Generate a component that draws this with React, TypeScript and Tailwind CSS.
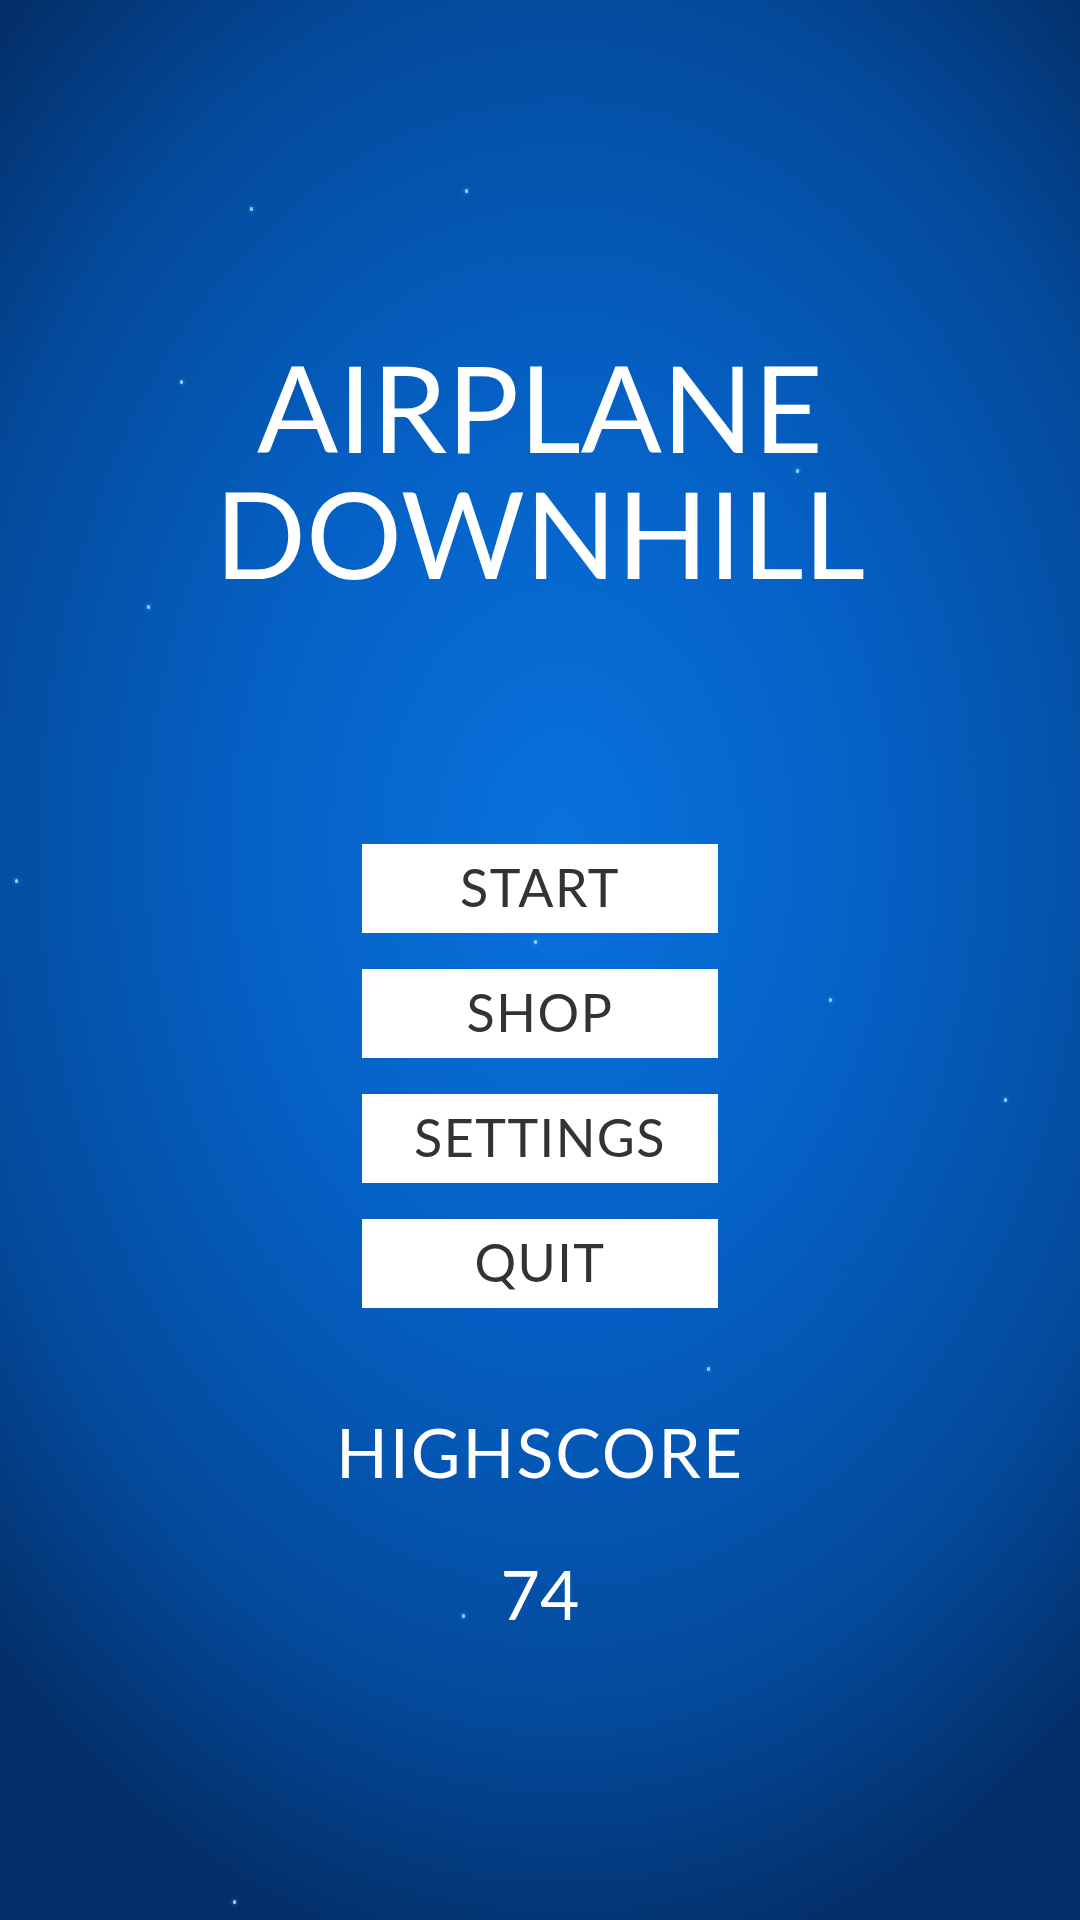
const stars = [
  { x: 250, y: 207 },
  { x: 465, y: 189 },
  { x: 180, y: 380 },
  { x: 796, y: 469 },
  { x: 147, y: 605 },
  { x: 15, y: 879 },
  { x: 534, y: 940 },
  { x: 829, y: 998 },
  { x: 1004, y: 1098 },
  { x: 707, y: 1367 },
  { x: 462, y: 1614 },
  { x: 233, y: 1900 },
];

const menu = ["START", "SHOP", "SETTINGS", "QUIT"];

export default function App() {
  return (
    <div
      className="relative overflow-hidden w-[1080px] h-[1920px] bg-[radial-gradient(ellipse_75%_60%_at_52%_44%,#0872de_0%,#0560c4_40%,#044a9c_75%,#032e68_100%)] text-white flex flex-col items-center"
      style={{ fontFamily: "Lato, 'Open Sans', sans-serif" }}
    >
      {/* stars */}
      {stars.map((s, i) => (
        <span
          key={i}
          className="absolute w-[3px] h-[4px] rounded-full bg-[#8fd0ff] shadow-[0_0_4px_#5ab4ff]"
          style={{ left: s.x, top: s.y }}
        />
      ))}

      <h1 className="relative mt-[344px] flex flex-col items-center text-[120px] font-normal text-center">
        <span className="block h-[126px] leading-[126px]">AIRPLANE</span>
        <span className="block h-[126px] leading-[126px]">DOWNHILL</span>
      </h1>

      <div className="relative mt-[248px] flex flex-col gap-[36px]">
        {menu.map((m) => (
          <button
            key={m}
            className="w-[356px] h-[89px] bg-white text-[#333333] text-[52px] font-normal tracking-[1.5px] flex items-center justify-center pb-[4px]"
          >
            {m}
          </button>
        ))}
      </div>

      <div className="relative mt-[104px] text-[68px] leading-[80px] font-normal tracking-[2px]">
        HIGHSCORE
      </div>
      <div className="relative mt-[62px] text-[68px] leading-[80px] font-normal">
        74
      </div>
    </div>
  );
}
